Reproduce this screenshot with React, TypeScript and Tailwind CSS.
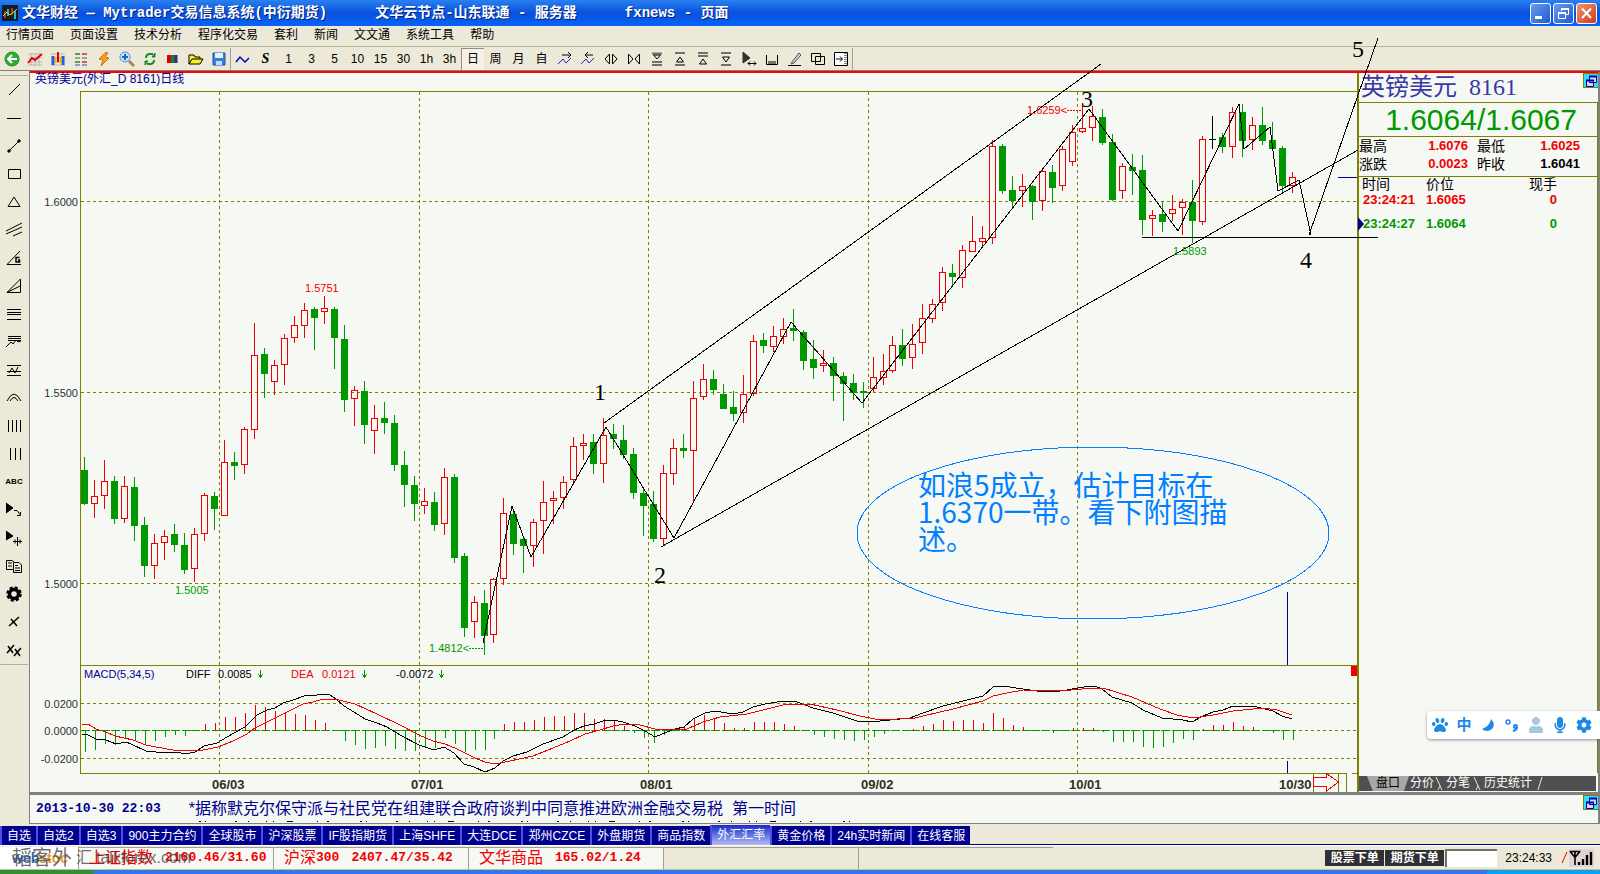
import type { ReactNode } from 'react';
import { FaCog, FaMicrophone, FaPaw, FaUser } from 'react-icons/fa';

type Candle = ['r' | 'g' | 'k', number, number, number, number];

// colour, high, body top, body bottom, low
const candles: Candle[] = [
  ['g', 457, 470, 504, 505], ['r', 480, 496, 504, 518], ['r', 460, 481, 496, 509], ['g', 476, 481, 519, 524],
  ['r', 476, 486, 519, 523], ['g', 477, 487, 526, 541], ['g', 517, 525, 566, 577], ['r', 534, 543, 566, 579],
  ['r', 530, 536, 543, 560], ['g', 524, 534, 545, 552], ['g', 533, 545, 570, 574], ['r', 528, 534, 569, 582],
  ['r', 493, 495, 534, 541], ['g', 492, 496, 509, 530], ['r', 440, 462, 516, 516], ['g', 452, 462, 466, 480],
  ['r', 427, 429, 465, 474], ['r', 323, 355, 430, 439], ['g', 348, 354, 374, 398], ['r', 360, 365, 382, 395],
  ['r', 334, 338, 365, 385], ['r', 316, 325, 338, 343], ['r', 303, 310, 326, 338], ['g', 307, 309, 318, 350],
  ['r', 296, 308, 312, 324], ['g', 307, 309, 338, 369], ['g', 325, 339, 400, 412], ['r', 386, 390, 399, 426],
  ['g', 381, 391, 425, 444], ['r', 405, 418, 431, 454], ['g', 402, 418, 423, 434], ['g', 415, 423, 465, 471],
  ['g', 451, 465, 485, 507], ['g', 476, 485, 504, 521], ['r', 488, 501, 506, 514], ['g', 492, 502, 525, 531],
  ['r', 468, 477, 524, 535], ['g', 474, 477, 558, 563], ['g', 553, 556, 628, 637], ['r', 596, 602, 622, 638],
  ['g', 590, 603, 636, 655], ['r', 578, 579, 635, 643], ['r', 498, 513, 579, 585], ['g', 512, 514, 544, 555],
  ['g', 537, 539, 546, 573], ['r', 519, 522, 546, 567], ['r', 481, 502, 521, 554], ['r', 491, 498, 501, 524],
  ['r', 476, 482, 498, 509], ['r', 437, 446, 480, 485], ['r', 434, 443, 445, 460], ['g', 434, 442, 464, 474],
  ['r', 418, 435, 464, 483], ['g', 424, 434, 439, 449], ['g', 425, 440, 455, 459], ['g', 448, 454, 493, 499],
  ['g', 488, 493, 506, 536], ['g', 491, 504, 539, 542], ['r', 465, 473, 539, 545], ['r', 439, 448, 474, 485],
  ['g', 434, 448, 451, 458], ['r', 381, 398, 451, 503], ['r', 364, 379, 397, 400], ['g', 370, 379, 390, 395],
  ['g', 384, 394, 409, 409], ['g', 391, 407, 414, 421], ['r', 375, 394, 413, 423], ['r', 335, 341, 394, 396],
  ['g', 333, 340, 346, 353], ['r', 326, 336, 347, 352], ['r', 318, 329, 337, 344], ['g', 309, 328, 331, 341],
  ['g', 330, 332, 361, 370], ['g', 340, 359, 368, 379], ['r', 350, 363, 365, 372], ['g', 357, 363, 376, 401],
  ['g', 372, 376, 384, 421], ['g', 374, 383, 393, 400], ['g', 382, 391, 393, 408], ['r', 357, 377, 389, 392],
  ['r', 354, 371, 378, 385], ['r', 336, 345, 371, 373], ['g', 329, 345, 359, 366], ['r', 324, 344, 358, 369],
  ['r', 304, 318, 343, 354], ['r', 299, 304, 319, 323], ['r', 267, 272, 303, 311], ['g', 264, 273, 277, 286],
  ['r', 245, 250, 278, 288], ['r', 216, 241, 252, 252], ['r', 226, 238, 242, 246], ['r', 140, 146, 238, 244],
  ['g', 144, 146, 191, 194], ['g', 176, 190, 201, 208], ['r', 174, 186, 191, 207], ['g', 185, 186, 202, 220],
  ['r', 168, 171, 201, 211], ['g', 165, 172, 188, 203], ['r', 146, 149, 186, 191], ['r', 125, 132, 162, 166],
  ['r', 103, 128, 132, 133], ['r', 106, 116, 128, 141], ['g', 109, 117, 143, 145], ['g', 134, 142, 200, 201],
  ['r', 163, 166, 191, 199], ['g', 154, 167, 171, 195], ['g', 155, 170, 220, 235], ['r', 210, 215, 219, 236],
  ['g', 201, 214, 222, 232], ['r', 195, 209, 214, 221], ['r', 199, 202, 208, 235], ['g', 180, 202, 221, 243],
  ['r', 136, 139, 222, 225], ['k', 116, 139, 140, 149], ['g', 133, 137, 147, 153], ['r', 107, 112, 147, 158],
  ['g', 104, 112, 141, 157], ['r', 117, 125, 140, 150], ['g', 107, 125, 141, 145], ['g', 122, 140, 149, 149],
  ['g', 146, 148, 186, 193], ['r', 172, 177, 186, 193],
];

// MACD histogram, positive values point up
const bars = [
  -21, -19, -13, -14, -8, -10, -14, -10, -6, -4, -5, 0, 6, 7, 13, 13, 17, 25, 23, 19, 18, 16, 15, 10, 7, 0,
  -10, -14, -18, -17, -15, -18, -20, -20, -17, -17, -7, -13, -21, -19, -19, -8, 6, 8, 8, 10, 13, 14, 14, 17,
  17, 11, 11, 9, 4, -2, -7, -12, -4, 0, 3, 11, 15, 11, 7, 2, 2, 8, 8, 8, 6, 4, 0, -4, -6, -8, -9, -10, -9, -6,
  -3, 0, 0, 1, 4, 6, 10, 9, 10, 10, 7, 17, 12, 5, 3, 0, 0, -2, 0, 2, 2, 2, -1, -11, -11, -11, -16, -17, -16,
  -12, -8, -9, 1, 5, 5, 8, 4, 3, 0, -2, -9, -9,
];

const diffLine =
  '82,734 88,735 96,739 106,740 116,744 126,742 131,744 146,751 156,752 177,752 185,754 195,752 204,746 217,743 227,737 245,727 257,715 267,710 275,708 283,703 293,700 304,696 317,695 323,694 330,695 336,699 344,706 354,712 365,719 377,723 387,727 400,735 419,745 434,750 444,747 454,753 464,764 474,767 485,772 495,768 503,761 513,756 527,752 543,744 563,737 574,730 584,726 594,724 603,721 613,720 623,722 635,726 645,731 655,737 667,732 675,729 684,727 693,719 705,713 715,711 733,714 743,712 753,707 765,704 783,701 797,702 813,708 833,713 857,721 870,722 890,720 910,718 923,713 943,706 967,700 983,696 993,687 1003,686 1023,689 1037,691 1053,692 1067,690 1078,688 1090,686 1097,687 1102,689 1112,697 1132,703 1143,710 1162,718 1183,720 1192,722 1203,716 1213,712 1223,710 1233,706 1257,707 1273,711 1282,716 1292,719';
const deaLine =
  '82,724 88,724 96,729 106,732 115,736 133,740 146,745 156,747 173,750 187,751 203,750 218,747 233,741 247,734 255,728 267,722 283,714 303,704 313,702 323,699 335,699 355,704 377,714 400,725 419,735 433,741 445,744 457,749 475,758 485,762 495,764 510,761 533,756 553,748 570,741 585,734 600,730 613,726 625,724 640,725 655,729 667,730 687,729 703,722 720,717 747,714 767,709 787,704 810,704 837,710 860,716 880,720 915,718 923,716 953,709 983,701 993,696 1007,693 1023,690 1060,691 1093,688 1103,688 1132,697 1160,709 1177,715 1193,718 1213,715 1233,711 1263,708 1277,710 1292,715';
const wave =
  '483,643 512,506 531,557 606,427 674,538 791,322 862,403 1089,109 1178,231 1239,104 1244,149 1270,127 1278,191 1299,180 1311,235';

const candleX = (i: number) => (i < 41 ? 84 : i < 81 ? 83 : 82) + 10 * i;

const ink = { r: '#f00000', g: '#009800', k: '#000000' };

function CandleMark({ candle, x }: { candle: Candle; x: number }) {
  const [kind, high, top, bottom, low] = candle;
  const color = ink[kind];
  if (kind === 'r') {
    return (
      <g fill={color}>
        <rect x={x} y={high} width={1} height={top - high} />
        <rect x={x} y={bottom} width={1} height={low - bottom} />
        <rect x={x - 2.5} y={top + 0.5} width={6} height={Math.max(bottom - top - 1, 2)} fill="none" stroke={color} />
      </g>
    );
  }
  return (
    <g fill={color}>
      <rect x={x} y={high} width={1} height={low - high} />
      <rect x={x - 3} y={top} width={7} height={bottom - top} />
    </g>
  );
}

function Chart() {
  return (
    <svg
      viewBox="30 73 1327 719"
      className="pointer-events-none relative z-10 block h-auto w-full overflow-visible font-['Liberation_Sans','Noto_Sans_CJK_SC',sans-serif]"
      shapeRendering="crispEdges"
      role="img"
    >
      {/* Grid */}
      <g stroke="#808000" strokeDasharray="3 3">
        {[201.5, 392.5, 583.5, 703.5, 730.5, 758.5].map((y) => (
          <line key={y} x1={81} x2={1356} y1={y} y2={y} />
        ))}
        {[219.5, 419.5, 648.5, 868.5, 1077.5].map((x) => (
          <line key={x} x1={x} x2={x} y1={92} y2={773} />
        ))}
      </g>
      <g stroke="#808000" fill="none">
        <path d="M1357 91.5H80.5V773.5H1346.5V792M80 665.5H1357M1313.5 773V792M1338.5 773V792M1352 773.5H1357" />
      </g>

      {/* Candles */}
      {candles.map((candle, i) => (
        <CandleMark key={i} candle={candle} x={candleX(i)} />
      ))}

      {/* MACD */}
      <line x1={82} x2={1294} y1={730.5} y2={730.5} stroke="#009800" strokeDasharray="8 2" />
      {bars.map((value, i) => (
        <rect
          key={i}
          x={candleX(i) + 1}
          y={value > 0 ? 730 - value : 730}
          width={1}
          height={Math.abs(value) + 1}
          fill={value > 0 ? ink.r : ink.g}
        />
      ))}
      <polyline points={diffLine} fill="none" stroke="#000" />
      <polyline points={deaLine} fill="none" stroke="#f00000" />

      {/* Hand drawn lines */}
      <g stroke="#000" fill="none">
        <polyline points={wave} />
        <line x1={604} y1={423} x2={1101} y2={64} />
        <line x1={661} y1={547} x2={1358} y2={150} />
        <line x1={1309} y1={235} x2={1378} y2={38} />
        <line x1={1142} y1={237.5} x2={1378} y2={237.5} />
      </g>
      <path d="M1338 177.5H1357M1287.5 592V665M1287.5 761V773" stroke="#000090" />
      <ellipse cx={1093} cy={533} rx={236} ry={86} fill="none" stroke="#0080ff" />
      <rect x={1351} y={666} width={6} height={10} fill="#f00000" />
      <path d="M1313.5 777.5H1326.5V773.5L1338.5 782L1326.5 791V786.5H1313.5Z" fill="#f8faf6" stroke="#f00000" />

      {/* Price labels */}
      <g fontSize={11} fill="#303030" textAnchor="end">
        <text x={78} y={206}>1.6000</text>
        <text x={78} y={397}>1.5500</text>
        <text x={78} y={588}>1.5000</text>
        <text x={78} y={708}>0.0200</text>
        <text x={78} y={735}>0.0000</text>
        <text x={78} y={763}>-0.0200</text>
      </g>
      <g fontSize={11}>
        <text x={305} y={292} fill="#f00000">1.5751</text>
        <text x={1027} y={114} fill="#f00000">1.6259&lt;</text>
        <text x={175} y={594} fill="#009800">1.5005</text>
        <text x={429} y={652} fill="#009800">1.4812&lt;</text>
        <text x={1173} y={255} fill="#009800">1.5893</text>
        <text x={84} y={678} fill="#000090">MACD(5,34,5)</text>
        <text x={186} y={678}>DIFF</text>
        <text x={218} y={678}>0.0085</text>
        <text x={291} y={678} fill="#f00000">DEA</text>
        <text x={322} y={678} fill="#f00000">0.0121</text>
        <text x={396} y={678}>-0.0072</text>
      </g>
      <path d="M1067 110.5H1082" stroke="#f00000" strokeDasharray="2 1" />
      <path d="M469 648.5H483" stroke="#009800" strokeDasharray="2 1" />
      <path d="M260.5 670V677M258.5 674.5L260.5 677L262.5 674.5M364.5 670V677M362.5 674.5L364.5 677L366.5 674.5M441.5 670V677M439.5 674.5L441.5 677L443.5 674.5" fill="none" stroke="#009800" />
      <g fontSize={13} fontWeight={700} fill="#303020">
        <text x={212} y={789}>06/03</text>
        <text x={411} y={789}>07/01</text>
        <text x={640} y={789}>08/01</text>
        <text x={861} y={789}>09/02</text>
        <text x={1069} y={789}>10/01</text>
        <text x={1279} y={789}>10/30</text>
      </g>
      <text x={35} y={83} fontSize={12} fill="#000090">英镑美元(外汇_D 8161)日线</text>

      {/* Wave numbers */}
      <g fontSize={24} textAnchor="middle" className="font-['Liberation_Serif',serif]">
        <text x={600} y={400}>1</text>
        <text x={660} y={583}>2</text>
        <text x={1087} y={107}>3</text>
        <text x={1306} y={268}>4</text>
        <text x={1358} y={57}>5</text>
      </g>
      <g fontSize={28} fill="#0080ff" className="font-['Noto_Sans_CJK_SC',sans-serif]">
        <text x={918} y={496}>如浪5成立，估计目标在</text>
        <text x={918} y={523}>1.6370一带。看下附图描</text>
        <text x={918} y={550}>述。</text>
      </g>
    </svg>
  );
}

function Icon({ children, className = 'h-4 w-4' }: { children: ReactNode; className?: string }) {
  return (
    <svg viewBox="0 0 16 16" className={className} fill="none" stroke="#000" aria-hidden="true">
      {children}
    </svg>
  );
}

const quickTools = [
  <Icon key="back">
    <circle cx="8" cy="8" r="7" fill="#2fae2f" stroke="#1c8a1c" />
    <path d="M13 8H5M8 4L4 8L8 12" stroke="#fff" strokeWidth="2" />
  </Icon>,
  <Icon key="trend">
    <path d="M1 3H15M1 7H15M1 11H15M1 14H15M4 2V15M8 2V15M12 2V15" stroke="#b8b8b8" />
    <path d="M1 12L5 7L8 9L15 3" stroke="#e00000" strokeWidth="2" />
  </Icon>,
  <Icon key="kline">
    <path d="M1 3H15M1 7H15M1 11H15M1 14H15" stroke="#b8b8b8" />
    <path d="M3 5V14M13 5V14" stroke="#2060e0" strokeWidth="3" />
    <path d="M5.5 6V12M10.5 6V12" stroke="#f0b000" strokeWidth="2" />
    <path d="M8 1V11" stroke="#e00000" strokeWidth="2" />
  </Icon>,
  <Icon key="list">
    <path d="M2 3H7M2 11H7" stroke="#50a050" strokeWidth="2" />
    <path d="M9 3H14M9 11H14" stroke="#d06060" strokeWidth="2" />
    <path d="M2 7H7M9 7H14M2 14H7M9 14H14" stroke="#90a0c0" strokeWidth="2" />
  </Icon>,
  <Icon key="flash">
    <path d="M10 1L3 8L7 9L5 15L13 7L9 6L12 2Z" fill="#f8a020" stroke="#d07010" />
  </Icon>,
  <Icon key="zoom">
    <path d="M10 10L15 15" stroke="#b08050" strokeWidth="3" />
    <circle cx="6" cy="6" r="5" fill="#c8e4ff" stroke="#5090d0" />
    <path d="M3 6H9M6 3V9" stroke="#2060c0" strokeWidth="2" />
  </Icon>,
  <Icon key="refresh">
    <path d="M4 7Q4 3 8 3H11M12 9Q12 13 8 13H5" stroke="#10902c" strokeWidth="2" />
    <path d="M10 6H13V2ZM6 10H3V14Z" fill="#10902c" stroke="#10902c" />
  </Icon>,
  <Icon key="palette">
    <path d="M4 4V12" stroke="#e00000" strokeWidth="4" />
    <path d="M8 4V12" stroke="#108040" strokeWidth="4" />
    <path d="M11 4V12" stroke="#303080" strokeWidth="3" />
  </Icon>,
  <Icon key="open">
    <path d="M1 13V4H6L7 6H12V8M1 13L4 8H15L12 13Z" fill="#f8f020" />
  </Icon>,
  <Icon key="save">
    <path d="M2 2H14V14H2Z" fill="#3080e0" stroke="#1858a8" />
    <path d="M4 2H12V7H4Z" fill="#e8f0ff" stroke="none" />
    <path d="M5 10H11V14H5Z" fill="#c8d8f0" stroke="none" />
  </Icon>,
];

const periods = ['1', '3', '5', '10', '15', '30', '1h', '3h', '日', '周', '月', '自'];

const chartTools = [
  <Icon key="fwd"><path d="M1 13L6 8L9 12L14 7" stroke="#2020e0" /><path d="M5 4H13M11 1L14 4L11 7" /></Icon>,
  <Icon key="rev"><path d="M1 13L6 8L9 12L14 7" stroke="#2020e0" /><path d="M5 4H13M8 1L5 4L8 7" /></Icon>,
  <Icon key="out"><path d="M6.5 3V13L2 8ZM9.5 3V13L14 8Z" /></Icon>,
  <Icon key="in"><path d="M2.5 3V13L7 8ZM13.5 3V13L9 8Z" /></Icon>,
  <Icon key="a"><path d="M3 2.5H13M3 11H13M3 14H13" stroke="#707070" strokeWidth="2" /><path d="M4.5 4H11.5L8 8Z" /></Icon>,
  <Icon key="b"><path d="M3 2H13M3 14H13" stroke="#707070" strokeWidth="2" /><path d="M4.5 11H11.5L8 6Z" /></Icon>,
  <Icon key="c"><path d="M3 2H13M3 5H13" stroke="#707070" strokeWidth="2" /><path d="M4.5 13H11.5L8 8Z" /></Icon>,
  <Icon key="d"><path d="M3 2H13M3 14H13" stroke="#707070" strokeWidth="2" /><path d="M4.5 6H11.5L8 11Z" /></Icon>,
  <Icon key="pick"><path d="M2 1V12L9 7Z" fill="#303030" stroke="#303030" /><path d="M7 12.5H15M9 10.5L7 12.5L9 14.5M13 10.5L15 12.5L13 14.5" /></Icon>,
  <Icon key="ruler"><path d="M2.5 4V13.5H13.5V4M5 10V13M7 10V13M9 10V13M11 10V13" /></Icon>,
  <Icon key="pen"><path d="M1 14.5H14" /><path d="M5 11L12 2L14 4L7 12L4 13Z" fill="#d0d0d0" stroke="#505050" /></Icon>,
  <Icon key="copy"><path d="M1.5 2.5H10.5V10.5H1.5ZM5.5 5.5H14.5V13.5H5.5Z" /></Icon>,
  <Icon key="dock"><path d="M1.5 1.5H14.5V14.5H1.5Z" fill="#fff" /><path d="M12.5 2V14" stroke="#808080" strokeWidth="3" strokeDasharray="1 1" /><path d="M3 8H9M7 5.5L9.5 8L7 10.5" /></Icon>,
];

const drawTools: { name: string; art: ReactNode }[] = [
  { name: '线段', art: <path d="M3 13L14 2" /> },
  { name: '水平线', art: <path d="M1 8.5H15" /> },
  { name: '箭头', art: <><path d="M3 13L13 3" /><path d="M2 12L4 14M12 2L14 4" strokeWidth="3" /></> },
  { name: '矩形', art: <path d="M2.5 3.5H14.5V12.5H2.5Z" /> },
  { name: '三角形', art: <path d="M8 3L14 12.5H2Z" /> },
  { name: '平行线', art: <path d="M0 9L16 1M0 12L16 5M7 14L16 10" /> },
  { name: '江恩角度', art: <><path d="M14 1L1 14.5H15" /><path d="M13.5 7.5H10V12H13.5V10H12" strokeWidth="1.5" /></> },
  { name: '扇形', art: <path d="M14.5 1V14.5H1L14.5 1M1 14.5L14 8" /> },
  { name: '水平组', art: <path d="M1 3.5H15M1 6.5H15M1 8.5H15M1 13.5H15" /> },
  { name: '波段', art: <path d="M2 2.5H15M2 4.5H15M2 6.5H15M0 13L5 8L7 10L10 6L12 8L15 7" /> },
  { name: '回撤', art: <path d="M1 3.5H15M1 9.5H15M1 13.5H15M3 11L6 6L9 11L12 5" /> },
  { name: '弧线', art: <path d="M1 11Q8 -3 15 11M4 11Q8 4 12 11" /> },
  { name: '周期线', art: <path d="M2.5 2V14M6.5 2V14M10.5 2V14M14.5 2V14" /> },
  { name: '时间线', art: <path d="M4.5 2V14M9.5 2V14M14.5 2V14" /> },
  { name: 'ABC', art: null },
  { name: '选取', art: <><path d="M0 1V11L7 6Z" fill="#000" /><path d="M8 8.5H11L14.5 13M14.5 10V13.5H11" /></> },
  { name: '移动', art: <><path d="M0 1V10L7 6Z" fill="#000" /><path d="M7 11.5H16M11.5 7V16M9 9.5V13.5M14 9.5V13.5" /></> },
  { name: '复制', art: <path d="M7 11.5H.5V2.5H6L8 4M2 5H6M2 8H6M7.5 4.5H13L15.5 7V14.5H7.5ZM9 7.5H12M9 10H14M9 12.5H14" /> },
  { name: '设置', art: <><circle cx="8" cy="8" r="4.5" strokeWidth="3.5" /><circle cx="8" cy="8" r="6.5" strokeWidth="2.5" strokeDasharray="3 2.1" /></> },
  { name: '删除', art: <path d="M3 12L13 3M5 5L11 12" strokeWidth="1.5" /> },
  { name: '全部删除', art: <path d="M1 11L8 3M2 4L7 11M8 14L15 6M9 7L14 14" strokeWidth="1.5" /> },
];

const menus = ['行情页面', '页面设置', '技术分析', '程序化交易', '套利', '新闻', '文文通', '系统工具', '帮助'];

const pageTabs = [
  '自选', '自选2', '自选3', '900主力合约', '全球股市', '沪深股票', 'IF股指期货', '上海SHFE', '大连DCE',
  '郑州CZCE', '外盘期货', '商品指数', '外汇汇率', '黄金价格', '24h实时新闻', '在线客服',
];

function TitleBar() {
  return (
    <header className="flex h-[26px] items-center bg-gradient-to-b from-[#2a80f0] via-[#0a50dc] to-[#0664f8] pl-[2px] pr-[3px] font-['Liberation_Mono','Noto_Sans_CJK_SC',monospace] text-sm font-bold text-white [text-shadow:1px_1px_0_#002080]">
      <svg viewBox="0 0 16 16" className="mr-1 h-4 w-4" aria-hidden="true">
        <path d="M0 0H16V16H0Z" fill="#102020" />
        <path d="M3 6V13M10 3V10" stroke="#e02020" strokeWidth="2" />
        <path d="M6 4V11M13 6V14" stroke="#20c0c0" strokeWidth="2" />
        <path d="M1 11L5 7L8 10L15 4" fill="none" stroke="#e0d020" />
      </svg>
      <h1 className="whitespace-pre">文华财经 — Mytrader交易信息系统(中衍期货)</h1>
      <span className="ml-12 whitespace-pre">文华云节点-山东联通 - 服务器</span>
      <span className="ml-12 whitespace-pre">fxnews - 页面</span>
      <div className="ml-auto flex gap-[2px]">
        <button aria-label="最小化" className="h-[21px] w-[21px] rounded-[3px] border border-white bg-gradient-to-br from-[#6a9cf0] to-[#2058d0]">
          <svg viewBox="0 0 19 19" aria-hidden="true"><path d="M4 13.5H11" stroke="#fff" strokeWidth="3" /></svg>
        </button>
        <button aria-label="还原" className="h-[21px] w-[21px] rounded-[3px] border border-white bg-gradient-to-br from-[#6a9cf0] to-[#2058d0]">
          <svg viewBox="0 0 19 19" fill="none" stroke="#fff" aria-hidden="true">
            <path d="M7.5 7V4.5H14.5V10.5H12M4.5 8.5H11.5V14.5H4.5Z" />
            <path d="M7 5H15M4 9H12" strokeWidth="2" />
          </svg>
        </button>
        <button aria-label="关闭" className="h-[21px] w-[21px] rounded-[3px] border border-white bg-gradient-to-br from-[#f09070] to-[#d03810]">
          <svg viewBox="0 0 19 19" aria-hidden="true"><path d="M5 4.5L14 14M14 4.5L5 14" stroke="#fff" strokeWidth="2" /></svg>
        </button>
      </div>
    </header>
  );
}

function Toolbar() {
  return (
    <div className="flex h-6 items-center border-b border-[#808080] text-xs">
      {quickTools.map((icon, i) => (
        <button key={i} aria-label={`工具${i + 1}`} className="flex h-full w-[23px] items-center justify-center">
          {icon}
        </button>
      ))}
      <span className="h-[22px] w-px bg-[#a0a0a0]" />
      <button aria-label="折线" className="flex h-full w-[23px] items-center justify-center">
        <Icon><path d="M1 11L5 6L10 11L14 7" stroke="#0000c0" strokeWidth="1.5" /></Icon>
      </button>
      <button className="h-full w-[23px] font-['Liberation_Serif',serif] text-sm font-bold italic">S</button>
      {periods.map((p) => (
        <button
          key={p}
          className={`flex h-[22px] w-[23px] items-center justify-center ${
            p === '日' ? 'border-l border-t border-[#909088] bg-[#f4f2e8]' : ''
          }`}
        >
          {p}
        </button>
      ))}
      {chartTools.map((icon, i) => (
        <button key={i} aria-label={`图表工具${i + 1}`} className="flex h-full w-[23px] items-center justify-center">
          {icon}
        </button>
      ))}
      <span className="h-[22px] w-px bg-[#a0a0a0]" />
    </div>
  );
}

function RestoreButton() {
  return (
    <button aria-label="还原窗口" className="h-[15px] w-[15px] border-b border-l border-t border-[#808000] bg-[#30e0f0]">
      <svg viewBox="0 0 14 14" fill="#d8d8e8" stroke="#0000c0" aria-hidden="true">
        <path d="M5.5 2.5H12.5V8.5H5.5ZM2.5 6.5H9.5V12.5H2.5Z" />
        <path d="M5 2.5H13M2 6.5H10" strokeWidth="2" />
      </svg>
    </button>
  );
}

function InputBar() {
  return (
    <div className="absolute -right-[2px] bottom-[53px] z-20 flex h-7 w-[173px] items-center gap-[8px] rounded-l bg-white pl-[5px] text-base text-[#1e88e8] shadow-[0_1px_3px_rgba(80,80,110,0.6)]">
      <FaPaw />
      <span className="w-4 text-center text-[15px] leading-4 font-bold">中</span>
      <svg viewBox="0 0 16 16" className="h-4 w-4" fill="currentColor" aria-hidden="true">
        <path d="M11 2Q10 9 2 12Q7 16 12 12Q16 7 11 2Z" />
      </svg>
      <svg viewBox="0 0 16 16" className="h-4 w-4" fill="none" stroke="currentColor" strokeWidth="1.5" aria-hidden="true">
        <circle cx="4" cy="5" r="2" />
        <circle cx="11.5" cy="9.5" r="1.5" strokeWidth="2" />
        <path d="M13 10Q13 13 9 14" strokeWidth="2" />
      </svg>
      <FaUser className="text-[#a0c8e0]" />
      <FaMicrophone />
      <FaCog />
    </div>
  );
}

function Slash({ d }: { d: string }) {
  return (
    <svg viewBox="0 0 8 15" className="h-[15px] w-2" fill="none" stroke="#e8e8e8" aria-hidden="true">
      <path d={d} />
    </svg>
  );
}

function QuotePanel() {
  return (
    <aside className="relative flex w-[241px] flex-none flex-col border-l-2 border-[#808000]">
      <div className="flex h-[30px] justify-between border-b border-[#808000]">
        <h2 className="whitespace-pre pl-[2px] font-['Liberation_Serif','Noto_Sans_CJK_SC',serif] text-2xl leading-[29px] text-[#3838a8]">英镑美元  8161</h2>
        <RestoreButton />
      </div>
      <div className="h-[34px] border-b border-r border-[#808000] pr-5 text-right text-[30px] leading-[34px] text-[#009800]">
        1.6064/1.6067
      </div>
      <dl className="grid h-10 grid-cols-[42px_67px_44px_68px] content-start border-b border-r border-[#808000] text-sm leading-[18px] [&>dd]:text-right [&>dd]:text-[13px] [&>dd]:font-bold">
        <dt>最高</dt>
        <dd className="text-[#f00000]">1.6076</dd>
        <dt className="pl-[9px]">最低</dt>
        <dd className="text-[#f00000]">1.6025</dd>
        <dt>涨跌</dt>
        <dd className="text-[#f00000]">0.0023</dd>
        <dt className="pl-[9px]">昨收</dt>
        <dd>1.6041</dd>
      </dl>
      <div className="relative flex-1 border-r border-[#808000]">
        <table className="w-full text-left text-[13px]">
          <thead>
            <tr className="h-[15px] text-sm leading-[15px]">
              <th className="w-[67px] pl-[3px] font-normal">时间</th>
              <th className="font-normal">价位</th>
              <th className="w-[72px] pr-10 text-right font-normal">现手</th>
            </tr>
          </thead>
          <tbody className="font-bold leading-4">
            <tr className="h-4 text-[#f00000]">
              <td className="pl-[4px]">23:24:21</td>
              <td>1.6065</td>
              <td className="pr-10 text-right">0</td>
            </tr>
            <tr className="h-8 text-[#009800]">
              <td className="pl-[4px]">23:24:27</td>
              <td>1.6064</td>
              <td className="pr-10 text-right">0</td>
            </tr>
          </tbody>
        </table>
        <svg viewBox="0 0 6 14" className="absolute -left-px top-10 h-[14px] w-[6px]" aria-hidden="true">
          <path d="M0 0L6 7L0 14Z" fill="#000090" />
        </svg>
      </div>
      <nav className="mr-[2px] mt-[3px] mb-px flex h-[15px] bg-[#505050] pl-2 text-xs leading-[15px] text-white">
        <button className="w-[42px] bg-[#a8a8a8] text-black [clip-path:polygon(0_0,100%_0,88%_100%,14%_100%)]">盘口</button>
        <button className="px-px">分价</button>
        <Slash d="M1 1L7 14M3 14L5 10" />
        <button className="px-[3px]">分笔</button>
        <Slash d="M1 1L7 14M3 14L5 10" />
        <button className="px-[3px]">历史统计</button>
        <Slash d="M3 14L7 1" />
      </nav>
      <InputBar />
    </aside>
  );
}

function NewsStrip() {
  return (
    <div className="relative flex h-[29px] justify-between overflow-hidden border-b border-[#808080] text-[#000090]">
      <p className="flex items-center gap-7 whitespace-pre pl-[6px]">
        <time className="font-['Liberation_Mono',monospace] text-[13px] font-bold">2013-10-30 22:03</time>
        <span className="text-base">*据称默克尔保守派与社民党在组建联合政府谈判中同意推进欧洲金融交易税  第一时间</span>
      </p>
      {/* Top edge of the next headline scrolling in */}
      <svg className="absolute bottom-px left-[169px] h-px w-[652px]" aria-hidden="true">
        <path d="M0 .5H652" stroke="#000" strokeDasharray="2 4 1 29 2 11 1 17 1 6 1 13 6 24 1 9 2 31" />
      </svg>
      <RestoreButton />
    </div>
  );
}

function PageTabs() {
  return (
    <nav className="flex h-[22px] items-end border-b border-white bg-[#ece9d8] text-xs text-white">
      {pageTabs.map((tab) => (
        <button
          key={tab}
          className={`flex items-center whitespace-nowrap border-l-2 border-[#5050e0] px-[5px] ${
            tab === '外汇汇率' ? 'h-5 bg-gradient-to-b from-[#2020c8] to-[#b8b8f0]' : 'h-[19px] bg-[#000090]'
          }`}
        >
          {tab}
        </button>
      ))}
      <span className="h-px flex-1 bg-[#000090]" />
    </nav>
  );
}

const indices = [
  { name: '上证指数', suffix: '', value: '2160.46/31.60' },
  { name: '沪深', suffix: '300', value: '2407.47/35.42' },
  { name: '文华商品', suffix: '', value: '165.02/1.24' },
];

function StatusBar() {
  return (
    <footer className="relative flex h-6 items-center border-b border-[#c0c0a8] text-[#f00000]">
      <div className="flex h-[22px] w-[78px] items-center bg-white pl-3 text-sm font-bold">
        <span className="text-[#3868b0]">web</span>
        <span className="text-[#f0a030]">stoc</span>
      </div>
      {indices.map(({ name, suffix, value }) => (
        <div key={name} className="flex h-[22px] w-[195px] items-center whitespace-nowrap border-l border-t border-[#a0a090] bg-[#f6f8f3] pl-[10px] text-base">
          {name}
          <span className="font-['Liberation_Mono',monospace] text-[13px] font-bold">{suffix}</span>
          <span className="ml-3 font-['Liberation_Mono',monospace] text-[13px] font-bold">{value}</span>
        </div>
      ))}
      <div className="h-[22px] w-[195px] border-l border-t border-[#a0a090]" />
      <div className="h-[22px] w-[195px] border-l border-t border-[#a0a090]" />
      <div className="absolute left-3 top-0 flex h-6 items-center gap-1 whitespace-nowrap text-[#404040]/75">
        <span className="text-xl">韬客外</span>
        <span className="text-base">汇</span>
        <span className="text-base">talkforex.com</span>
      </div>
      <div className="ml-auto flex items-center pr-[6px]">
        <button className="mr-px h-4 w-[59px] bg-[#303034] text-xs leading-4 font-bold text-white">股票下单</button>
        <button className="mr-px h-4 w-[59px] bg-[#303034] text-xs leading-4 font-bold text-white">期货下单</button>
        <input aria-label="代码" className="mr-2 h-[18px] w-[52px] border-l-2 border-t-2 border-[#707068] bg-white text-xs" />
        <time className="text-xs text-black">23:24:33</time>
        <svg viewBox="0 0 36 18" className="ml-[6px] h-[18px] w-9" fill="none" aria-hidden="true">
          <path d="M4 14L9 3" stroke="#f00000" />
          <path d="M11 0H36V18H11Z" fill="#e0d4d8" />
          <path d="M11.5 2.5H22.5M12.5 3L17 8.5L21.5 3M17 2V16" stroke="#000" strokeWidth="1.6" />
          <path d="M21 13V16M25 10V16M29 6V16M33 3V16" stroke="#000" strokeWidth="2.4" />
        </svg>
      </div>
    </footer>
  );
}

export default function App() {
  return (
    <div className="flex min-h-screen flex-col overflow-x-hidden bg-[#ece9d8] font-['Liberation_Sans','Noto_Sans_CJK_SC',sans-serif] text-black">
      <TitleBar />
      <nav className="flex h-[21px] items-center gap-4 border-b border-[#b8b8a0] pl-[6px] pb-[2px] text-xs">
        {menus.map((menu) => (
          <button key={menu} className="whitespace-nowrap">{menu}</button>
        ))}
      </nav>
      <Toolbar />
      <div className="flex">
        {/* Drawing tools */}
        <aside className="w-[30px] flex-none border-r border-[#808080] pr-px pt-[4px]">
          <div className="flex flex-col items-center border-b border-t border-[#b0b0a0]">
            {drawTools.map(({ name, art }) => (
              <button key={name} aria-label={name} className="flex h-7 w-7 items-center justify-center text-[8px] font-bold">
                {art ? <Icon>{art}</Icon> : name}
              </button>
            ))}
          </div>
        </aside>
        <main className="min-w-0 flex-1 border-r-2 border-t-2 border-[#808080] border-t-[#ff0000] bg-[#f6f8f3]">
          <div className="flex border-b-[3px] border-[#808080]">
            <div className="min-w-0 flex-1">
              <Chart />
            </div>
            <QuotePanel />
          </div>
          <NewsStrip />
        </main>
      </div>
      <PageTabs />
      <StatusBar />
      <div className="flex h-1 bg-[#3078e8]">
        <span className="h-full w-[94px] rounded-tr bg-[#309030]" />
        <span className="ml-auto h-full w-[113px] bg-[#10a0e8]" />
      </div>
    </div>
  );
}
